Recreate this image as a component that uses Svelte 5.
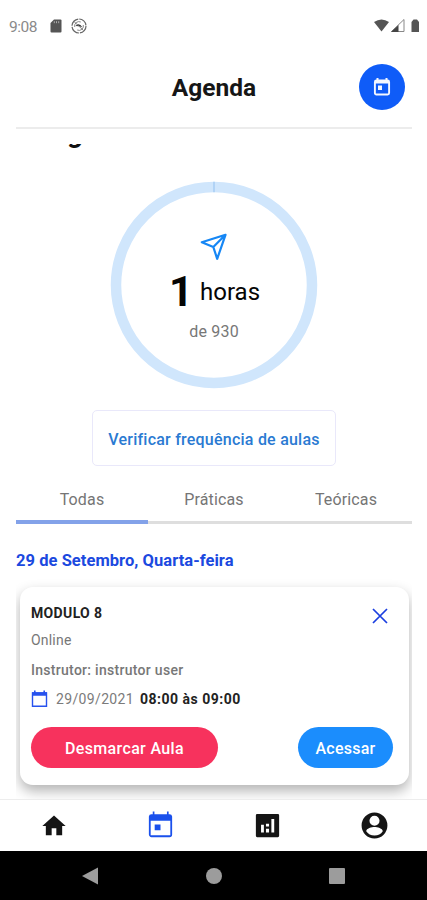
<script>
  let active = $state(0);
  const tabs = ['Todas', 'Práticas', 'Teóricas'];
</script>

<div class="screen">
  <div class="status">
    <span class="clock">9:08</span>
    <svg class="sd" width="12" height="14" viewBox="0 0 12 14"><path d="M4 .5h6.5q1 0 1 1v11q0 1-1 1h-9q-1 0-1-1V4z" fill="#555" /><path d="M4.3 2.2v2M6.5 2.2v2M8.7 2.2v2" stroke="#aaa" stroke-width="1" /></svg>
    <svg class="sync" width="16" height="16" viewBox="0 0 16 16"><circle cx="8" cy="8" r="7" fill="none" stroke="#666" stroke-width="1.200" stroke-dasharray="10 1" /><path d="M3.700 9A4.400 4.400 0 0 1 9.800 4M12.300 7A4.400 4.400 0 0 1 6.200 12" fill="none" stroke="#888" stroke-width="1" /><path d="M4.500 8Q8 4 11.500 9.500L8.500 8.300z" fill="#333" /><path d="M3 3.500l9.500 9" stroke="#777" stroke-width=".9" /></svg>
    <svg class="signals" width="48" height="16" viewBox="0 0 48 16"><path d="M1 4Q8.500-1 16 4L8.500 13.500Z" fill="#555" /><path d="M18.500 13.500L31 1.500v12z" fill="#fff" stroke="#888" stroke-width="1" /><path d="M18 14L25.500 7V14z" fill="#444" /><path d="M38.500 4l2-2.500h3.500l2 2.500v10h-7.500z" fill="#555" /></svg>
  </div>

  <header>
    <h1>Agenda</h1>
    <button class="round" aria-label="Calendário">
      <svg width="18" height="20" viewBox="0 0 18 20"><path d="M4.500 1v3M13.500 1v3" stroke="#f4f7ff" stroke-width="2" /><rect x="1.900" y="3.500" width="14.200" height="14" rx="1.500" fill="none" stroke="#f4f7ff" stroke-width="1.900" /><path d="M2 3h14v3.500H2z" fill="#f4f7ff" /><path d="M5 8.500h4v4.500H5z" fill="#f4f7ff" /></svg>
    </button>
  </header>

  <main>
    <div class="cut"><span>g</span></div>

    <section class="ring">
      <svg class="track" width="208" height="208" viewBox="0 0 208 208"><circle cx="104" cy="104" r="98" fill="none" stroke="#d0e6fc" stroke-width="10.500" /><path d="M104 .8v10.400" stroke="#9dc6f2" stroke-width="1.200" /></svg>
      <div class="inside">
        <svg width="28" height="28" viewBox="0 0 28 28"><path d="M25.500 1.800L1.800 9.200 13.300 14 17.200 25.800ZM25.500 1.800L13.300 14" fill="none" stroke="#1687f5" stroke-width="2.200" stroke-linejoin="round" /></svg>
        <div class="hours"><strong>1</strong><span>horas</span></div>
        <div class="total">de 930</div>
      </div>
    </section>

    <button class="check"><span>Verificar frequência de aulas</span></button>

    <nav class="tabs">
      {#each tabs as tab, i}
        <button class:active={active === i} onclick={() => (active = i)}>{tab}</button>
      {/each}
    </nav>

    <h2><span>29 de Setembro, Quarta-feira</span></h2>

    <article>
      <div class="top">
        <h3>MODULO 8</h3>
        <svg width="16" height="16" viewBox="0 0 16 16"><path d="M1 1l14 14M15 1L1 15" stroke="#1a3ee0" stroke-width="1.700" /></svg>
      </div>
      <p class="mode">Online</p>
      <p class="teacher">Instrutor: instrutor user</p>
      <div class="when">
        <svg width="17" height="18" viewBox="0 0 17 18"><path d="M1.500 3h14v13.200h-14z" fill="none" stroke="#2752ee" stroke-width="1.400" /><path d="M1 2.300h15v3.400H1zM3 .500h1.600v2H3zM12.400.500H14v2h-1.600z" fill="#2752ee" /></svg>
        <span class="day">29/09/2021</span>
        <b>08:00 às 09:00</b>
      </div>
      <div class="actions">
        <button class="cancel">Desmarcar Aula</button>
        <button class="open">Acessar</button>
      </div>
    </article>
  </main>

  <nav class="bottom">
    <div><svg width="28" height="28" viewBox="0 0 24 24"><path d="M10 20v-6h4v6h5v-8h3L12 3 2 12h3v8z" fill="#151515" /></svg></div>
    <div><svg width="31" height="31" viewBox="0 0 24 24"><path d="M19 4h-.7V2H17v2H7.300V2H6v2H5a2 2 0 0 0-2 1.800v14c0 1.100.9 2 2 2h14a2 2 0 0 0 2-2V5.800A2 2 0 0 0 19 4zm.6 16.400H4.400V9H19.600v11.400zM7.500 12v4.500h4.500V12z" fill="#1a50ec" fill-rule="evenodd" /></svg></div>
    <div><svg width="31" height="31" viewBox="0 0 24 24"><path d="M20 3H4a1 1 0 0 0-1 1v16a1 1 0 0 0 1 1h16a1 1 0 0 0 1-1V4a1 1 0 0 0-1-1zM9.200 17.500H7v-6h2.200zm4 0h-2.400v-3h2.400zm0-4.700h-2.400v-2.200h2.400zm4 4.700h-2.200V7h2.200z" fill="#151515" /></svg></div>
    <div><svg width="31" height="31" viewBox="0 0 24 24"><path d="M12 2a10 10 0 1 0 0 20 10 10 0 0 0 0-20zm0 2.400a3.900 3.900 0 1 1 0 7.800 3.900 3.900 0 0 1 0-7.800zm0 15.400c-2.800 0-5-1.300-6.400-3.400.03-2.100 4.200-3.200 6.400-3.200s6.370 1.100 6.400 3.200a7.600 7.600 0 0 1-6.400 3.400z" fill="#151515" /></svg></div>
  </nav>

  <div class="system">
    <svg width="18" height="18" viewBox="0 0 18 18"><path d="M1 9L17 .5v17z" fill="#9c9c9c" /></svg>
    <svg width="18" height="18" viewBox="0 0 18 18"><circle cx="9" cy="9" r="8" fill="#9c9c9c" /></svg>
    <svg width="18" height="18" viewBox="0 0 18 18"><rect x="1" y="1" width="16" height="16" rx="1" fill="#9c9c9c" /></svg>
  </div>
</div>

<style>
  :global(body) { margin: 0; }
  .screen { width: 427px; height: 900px; display: flex; flex-direction: column; background: #fff; font-family: Roboto, sans-serif; overflow: hidden; }
  .screen, .screen * { box-sizing: border-box; }
  svg { display: block; flex: none; }
  h1, h2, h3, p { margin: 0; white-space: nowrap; }
  button { font: inherit; border: 0; padding: 0; background: none; white-space: nowrap; }
  .status { height: 48px; display: flex; align-items: center; padding: 4px 6px 0 9px; flex: none; }
  .clock { font-size: 15.500px; color: #8a8a8a; width: 41px; letter-spacing: -.5px; line-height: 18px; padding-top: 1px; }
  .sync { margin-left: 9px; }
  .signals { margin-left: auto; }
  header { height: 81px; margin: 0 15px 0 16px; flex: none; display: grid; grid-template-columns: 46px 1fr 46px; align-items: center; border-bottom: 2px solid #ececec; }
  h1 { grid-column: 2; font-size: 24.500px; font-weight: 700; text-align: center; color: #161616; }
  .round { width: 46px; height: 46px; margin: -2px 0 0 -7px; border-radius: 50%; background: #0f5cf8; display: grid; place-items: center; }
  main { height: 670px; margin: 0 15px 0 16px; flex: none; overflow: hidden; display: flex; flex-direction: column; }
  .cut { height: 20px; margin-top: 15px; margin-left: 51px; overflow: hidden; flex: none; display: flex; align-items: flex-start; }
  .cut span { font-size: 28px; font-weight: 700; line-height: 30px; margin-top: -26px; color: #111; }
  .ring { width: 208px; height: 208px; margin: 17px auto 0; flex: none; display: grid; }
  .track, .inside { grid-area: 1 / 1; }
  .inside { display: flex; flex-direction: column; align-items: center; padding-top: 51.500px; }
  .hours { display: flex; align-items: baseline; height: 50px; margin-top: 6px; color: #050505; line-height: 50px; }
  .hours strong { font-size: 42px; font-weight: 700; margin-left: 1px; }
  .hours span { font-size: 24px; margin-left: 7px; position: relative; top: -6px; }
  .total { font-size: 16px; line-height: 20px; margin-top: 5px; color: #777; letter-spacing: .2px; }
  .check { width: 244px; height: 56px; margin: 21px auto 0; flex: none; border: 1.500px solid #e9e8fa; border-radius: 5px; color: #2a7ad2; font-size: 16px; font-weight: 500; letter-spacing: .23px; padding-top: 2px; }
  .tabs { display: flex; height: 58px; flex: none; }
  .tabs button { flex: 1; color: #757575; font-size: 16px; letter-spacing: .15px; border-bottom: 3px solid #dedede; padding-top: 12px; }
  .tabs .active { border-bottom: 4px solid #83a2e9; padding-top: 13px; }
  h2 { font-size: 16.500px; line-height: 22px; font-weight: 700; color: #1b49df; margin-top: 26px; letter-spacing: .05px; }
  article { flex: none; height: 198px; margin: 15px 3px 0 4px; border-radius: 13px; background: #fff; box-shadow: 0 6px 13px rgba(0,0,0,.3); padding: 16px 16px 0 11px; }
  .top { display: flex; justify-content: space-between; height: 26px; }
  .top svg { margin: 5px 5px 0 0; }
  h3 { font-size: 14px; line-height: 20px; font-weight: 700; color: #222; letter-spacing: .35px; }
  p { font-size: 14px; line-height: 20px; color: #777; }
  .mode { margin-top: 1px; letter-spacing: .2px; }
  .teacher { font-weight: 500; margin-top: 10px; letter-spacing: .29px; }
  .when { display: flex; align-items: center; height: 20px; margin-top: 9px; font-size: 14px; }
  .day { color: #7b7b7b; margin-left: 8px; letter-spacing: .35px; }
  b { color: #222; margin-left: 6px; letter-spacing: .5px; }
  .actions { display: flex; justify-content: space-between; margin-top: 18px; }
  .actions button { height: 41px; border-radius: 21px; color: #fff; font-size: 16px; font-weight: 500; padding-top: 1px; letter-spacing: .35px; }
  .cancel { width: 187px; background: #f7325d; }
  .actions .open { width: 95px; background: #1b8dfd; letter-spacing: .25px; }
  .bottom { height: 52px; flex: none; display: grid; grid-template-columns: repeat(4, 1fr); border-top: 1px solid #ededed; background: #fff; padding-left: 1px; }
  .bottom div { display: grid; place-items: center; }
  .bottom div:nth-child(2) { padding-bottom: 2px; }
  .bottom div:nth-child(4) { padding-left: 1px; }
  .system { height: 49px; flex: none; background: #000; display: flex; justify-content: space-between; align-items: center; padding: 0 81px 0 81px; }
</style>
